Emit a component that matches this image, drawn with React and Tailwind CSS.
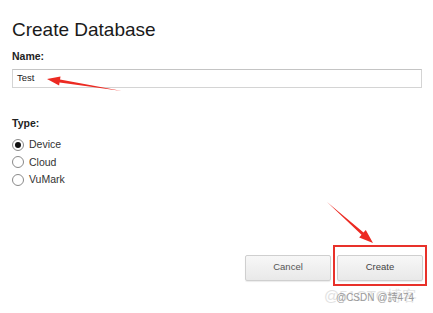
import React from "react";

function Radio({ checked, label }) {
  return (
    <div className="flex h-[17.5px] items-center gap-[5px]">
      <span className="flex h-[12px] w-[12px] items-center justify-center rounded-full border border-[#8a8a8a] bg-white">
        {checked && <span className="h-[6px] w-[6px] rounded-full bg-[#111]" />}
      </span>
      <span className="text-[10.5px] leading-[13px] text-[#333]">{label}</span>
    </div>
  );
}

export default function App() {
  return (
    <div
      className="relative h-[313px] w-[433px] overflow-hidden bg-white"
      style={{ fontFamily: '"Liberation Sans", Arial, sans-serif' }}
    >
      <div className="flex flex-col pl-[12px] pr-[10px] pt-[19px]">
        <h1 className="text-[19px] leading-[22px] text-[#1a1a1a]">Create Database</h1>
        <div className="mt-[9px] text-[10.5px] font-bold leading-[13px] text-[#222]">Name:</div>
        <div className="mt-[6px] flex h-[19px] w-[410px] items-center border border-[#d4d4d4] border-t-[#c4c4c4] pl-[4px] text-[9.5px] text-[#222]">
          Test
        </div>
        <div className="mt-[29px] text-[10.5px] font-bold leading-[13px] text-[#222]">Type:</div>
        <div className="mt-[6px] flex flex-col">
          <Radio checked label="Device" />
          <Radio label="Cloud" />
          <Radio label="VuMark" />
        </div>
        <div className="mt-[66px] flex justify-end gap-[6px]">
          <div className="flex h-[26px] w-[86px] items-center justify-center rounded-[2px] border border-[#cfcfcf] bg-gradient-to-b from-[#f7f7f7] to-[#e9e9e9] text-[9.5px] text-[#555] shadow-[0_1px_1px_rgba(0,0,0,0.08)]">
            Cancel
          </div>
          <div className="flex h-[26px] w-[86px] items-center justify-center rounded-[2px] border border-[#cfcfcf] bg-gradient-to-b from-[#f7f7f7] to-[#e9e9e9] text-[9.5px] text-[#444] shadow-[0_1px_1px_rgba(0,0,0,0.08)]">
            Create
          </div>
        </div>
      </div>

      {/* red highlight box */}
      <div className="absolute left-[333px] top-[245px] h-[41px] w-[94px] border-[2px] border-[#e8312a]" />

      {/* arrows */}
      <svg className="pointer-events-none absolute left-0 top-0" width="433" height="313" viewBox="0 0 433 313">
        <polygon
          fill="#ec2a22"
          points="47,79 60.5,76.6 60.04,79.57 122,91 59.56,82.53 59.1,85.5"
        />
        <polygon
          fill="#ec2a22"
          points="373,243 359.2,237.4 361.5,234.8 327,202 363.5,232.6 365.8,230"
        />
      </svg>

      {/* watermark */}
      <div className="absolute left-[324px] top-[287px] text-[15px] leading-[18px] text-[#e2e2e2]">@51CTO博客</div>
      <div
        className="absolute left-[336px] top-[292px] text-[10px] leading-[12px] text-[#9a9a9a]"
        style={{ fontFamily: '"Liberation Sans", "Noto Sans CJK TC", sans-serif' }}
      >
        @CSDN @詩474
      </div>
    </div>
  );
}
